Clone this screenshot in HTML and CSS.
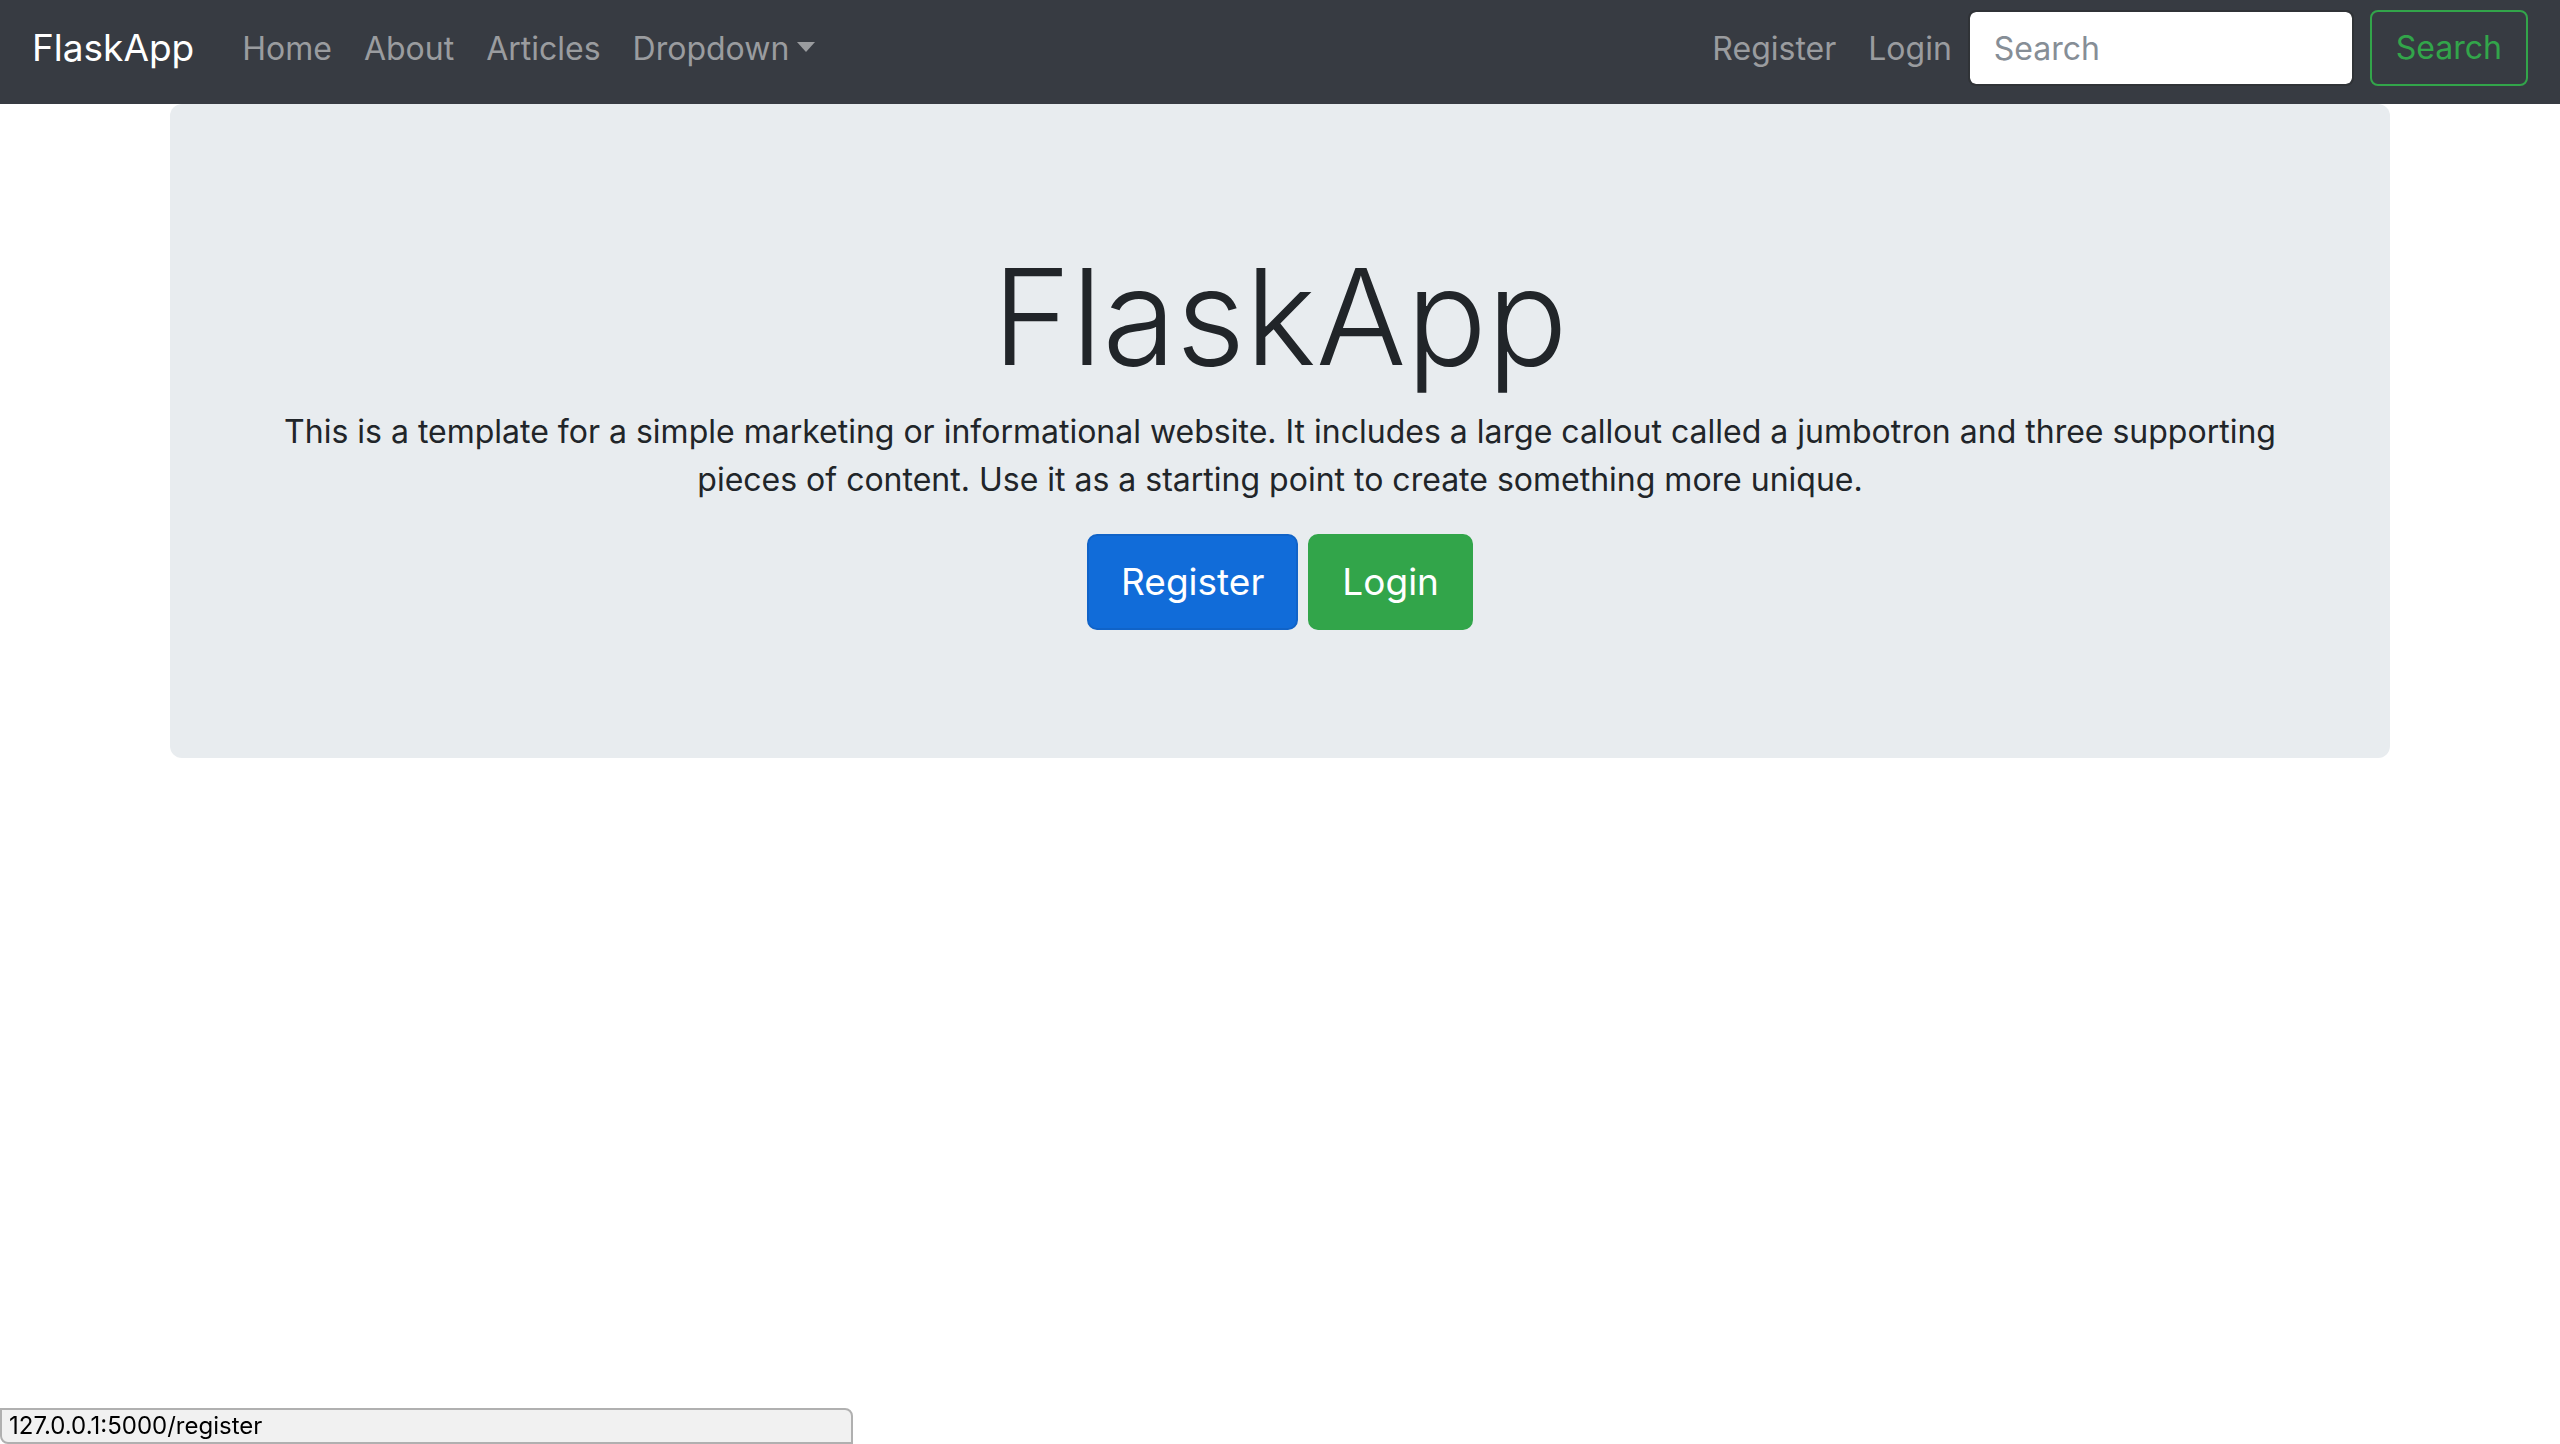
FILE: index.html
```
<!DOCTYPE html>
<html lang="en">
<head>
<meta charset="utf-8">
<meta name="viewport" content="width=device-width, initial-scale=1">
<title>FlaskApp</title>
<link rel="stylesheet" href="styles.css">
</head>
<body>
<nav class="navbar">
  <a class="brand" href="#">FlaskApp</a>
  <ul class="nav-list">
    <li><a class="nav-link" href="#">Home</a></li>
    <li><a class="nav-link" href="#">About</a></li>
    <li><a class="nav-link" href="#">Articles</a></li>
    <li><a class="nav-link dropdown-toggle" href="#">Dropdown</a></li>
  </ul>
  <ul class="nav-list nav-account">
    <li><a class="nav-link" href="#">Register</a></li>
    <li><a class="nav-link" href="#">Login</a></li>
  </ul>
  <form class="search-form">
    <input class="search-input" type="text" placeholder="Search" aria-label="Search">
    <button class="search-button" type="submit">Search</button>
  </form>
</nav>
<main class="container">
  <section class="jumbotron">
    <h1 class="title">FlaskApp</h1>
    <p class="lead">This is a template for a simple marketing or informational website. It includes a large callout called a jumbotron and three supporting pieces of content. Use it as a starting point to create something more unique.</p>
    <div class="actions">
      <a class="button button-primary" href="#">Register</a>
      <a class="button button-success" href="#">Login</a>
    </div>
  </section>
</main>
<div class="status-bar">127.0.0.1:5000/register</div>
</body>
</html>
```
FILE: styles.css
```
* {
  box-sizing: border-box;
}

body {
  margin: 0;
  background: #fff;
  color: #212529;
  font-family: Inter, "Liberation Sans", sans-serif;
  font-size: 32px;
  line-height: 48px;
}

a {
  text-decoration: none;
}

.navbar {
  display: flex;
  align-items: center;
  padding: 10px 32px 18px;
  background: #373b42;
}

.brand {
  margin-right: 32px;
  color: #fff;
  font-size: 37px;
}

.nav-list {
  display: flex;
  margin: 0;
  padding: 2px 0 0;
  list-style: none;
}

.nav-account {
  margin-left: auto;
}

.nav-link {
  display: flex;
  align-items: center;
  padding: 0 16px;
  color: #9a9c9f;
}

.dropdown-toggle::after {
  content: "";
  margin: 0 0 4px 8px;
  border: 9px solid transparent;
  border-top: 10px solid currentColor;
  border-bottom: 0;
}

.search-form {
  display: flex;
  gap: 16px;
}

.search-input,
.search-button {
  height: 76px;
  padding: 0 24px;
  border: 2px solid #303337;
  border-radius: 8px;
  font: inherit;
}

.search-input {
  width: 386px;
  background: #fff;
  background-clip: padding-box;
}

.search-input::placeholder {
  color: #868e96;
  opacity: 1;
}

.search-button {
  border-color: #32a54a;
  background: transparent;
  color: #32a54a;
}

.container {
  max-width: 2280px;
  margin: 0 auto;
  padding: 0 30px;
}

.jumbotron {
  padding: 128px 64px;
  border-radius: 12px;
  background: #e8ecef;
  text-align: center;
}

.title {
  margin: 0 0 8px;
  font-size: 134px;
  font-weight: 300;
  line-height: 168px;
}

.lead {
  margin: 0 0 30px;
}

.actions {
  display: flex;
  justify-content: center;
  gap: 10px;
}

.button {
  padding: 16px 32px;
  border: 2px solid;
  border-radius: 10px;
  color: #fff;
  font-size: 37px;
  line-height: 60px;
}

.button-primary {
  border-color: #1063c8;
  background: #116cd9;
}

.button-success {
  border-color: #32a54a;
  background: #32a54a;
}

.status-bar {
  position: fixed;
  bottom: 0;
  left: 0;
  width: calc(100% / 3);
  padding: 0 7px;
  border: 2px solid #b0b0b0;
  border-radius: 0 8px 0 8px;
  background: #f1f1f1;
  color: #000;
  font-size: 24px;
  line-height: 32px;
}
```
